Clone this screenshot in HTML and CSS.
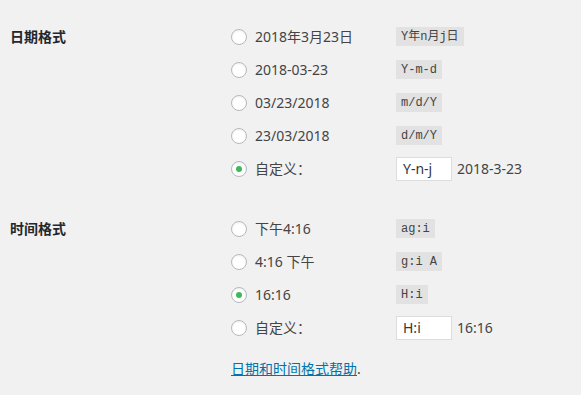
FILE: index.html
```html
<!DOCTYPE html>
<html lang="zh-CN">
<head>
    <meta charset="UTF-8">
    <meta name="viewport" content="width=device-width, initial-scale=1.0">
    <title>日期和时间格式</title>
    <link rel="stylesheet" href="styles.css">
</head>
<body>
    <div class="form-table">
        <div class="form-row">
            <div class="row-label">日期格式</div>
            <div class="row-field">
                <div class="option">
                    <span class="radio"></span>
                    <span class="option-text">2018年3月23日</span>
                    <code>Y年n月j日</code>
                </div>
                <div class="option">
                    <span class="radio"></span>
                    <span class="option-text">2018-03-23</span>
                    <code>Y-m-d</code>
                </div>
                <div class="option">
                    <span class="radio"></span>
                    <span class="option-text">03/23/2018</span>
                    <code>m/d/Y</code>
                </div>
                <div class="option">
                    <span class="radio"></span>
                    <span class="option-text">23/03/2018</span>
                    <code>d/m/Y</code>
                </div>
                <div class="option">
                    <span class="radio checked"></span>
                    <span class="option-text">自定义：</span>
                    <span class="custom-input">Y-n-j</span>
                    <span class="example">2018-3-23</span>
                </div>
            </div>
        </div>

        <div class="form-row time-row">
            <div class="row-label">时间格式</div>
            <div class="row-field">
                <div class="option">
                    <span class="radio"></span>
                    <span class="option-text">下午4:16</span>
                    <code>ag:i</code>
                </div>
                <div class="option">
                    <span class="radio"></span>
                    <span class="option-text">4:16 下午</span>
                    <code>g:i A</code>
                </div>
                <div class="option">
                    <span class="radio checked"></span>
                    <span class="option-text">16:16</span>
                    <code>H:i</code>
                </div>
                <div class="option">
                    <span class="radio"></span>
                    <span class="option-text">自定义：</span>
                    <span class="custom-input">H:i</span>
                    <span class="example">16:16</span>
                </div>
                <p class="help"><a href="#">日期和时间格式帮助</a>.</p>
            </div>
        </div>
    </div>
</body>
</html>
```

FILE: styles.css
```css
body {
    margin: 0;
    background: #f1f1f1;
    color: #444;
    font-family: "Noto Sans", "Noto Sans CJK SC", sans-serif;
    font-size: 14px;
}
.form-table {
    padding: 20px 0 0 10px;
}
.form-row {
    display: grid;
    grid-template-columns: 221px 1fr;
}
.time-row {
    margin-top: 27px;
}
.row-label {
    font-weight: 600;
    color: #23282d;
    line-height: 33px;
}
.option {
    display: grid;
    grid-template-columns: 24px 141px max-content max-content;
    justify-content: start;
    align-items: center;
    height: 33px;
}
.radio {
    width: 14px;
    height: 14px;
    border: 1px solid #b4b9be;
    border-radius: 50%;
    background: #fff;
    box-shadow: inset 0 1px 2px rgba(0,0,0,0.07);
    display: flex;
    align-items: center;
    justify-content: center;
}
.radio.checked::before {
    content: "";
    width: 6px;
    height: 6px;
    border-radius: 50%;
    background: #3cb95a;
}
.option-text {
    line-height: 20px;
}
code {
    justify-self: start;
    font-family: "Liberation Mono", "Noto Sans CJK SC", monospace;
    font-size: 12px;
    line-height: 14px;
    padding: 3px 5px 2px;
    background: #e2e2e2;
    color: #444;
}
.custom-input {
    box-sizing: border-box;
    width: 56px;
    height: 24px;
    line-height: 22px;
    padding: 0 6px;
    border: 1px solid #ddd;
    background: #fff;
    color: #32373c;
}
.example {
    margin-left: 5px;
}
.help {
    margin: 15px 0 0;
    line-height: 20px;
}
.help a {
    color: #0073aa;
    text-decoration: underline;
}
```
